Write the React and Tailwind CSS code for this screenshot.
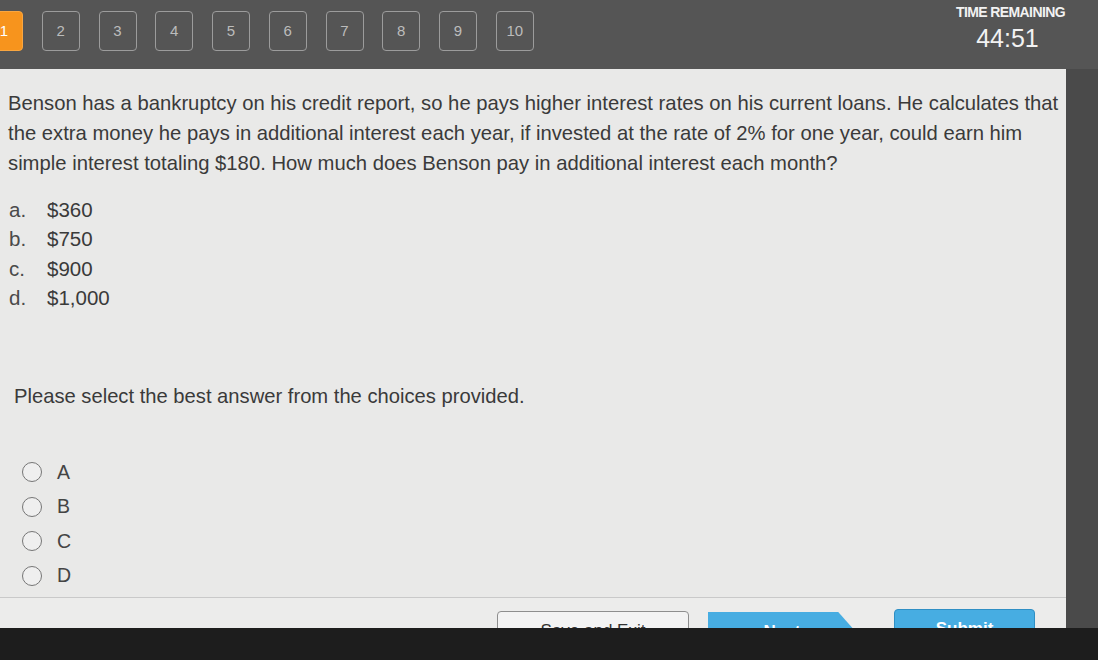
import React from 'react'

const choices = [
  { key: 'a.', value: '$360' },
  { key: 'b.', value: '$750' },
  { key: 'c.', value: '$900' },
  { key: 'd.', value: '$1,000' }
]

export default function App() {
  const questions = [1, 2, 3, 4, 5, 6, 7, 8, 9, 10]

  return (
    <div className="w-[1098px] h-[660px] bg-[#4a4a4a] flex flex-col overflow-hidden font-['Liberation_Sans',Arial,sans-serif]">
      {/* Top bar */}
      <header className="h-[69px] shrink-0 flex items-start bg-[#555555]">
        <nav className="flex gap-[18.75px] ml-[-15px] mt-[11px]">
          {questions.map((n) =>
            n === 1 ? (
              <div
                key={n}
                className="w-[38px] h-[40px] rounded-[4px] bg-[#f7941d] border border-[#f9a640] flex items-center justify-center text-white text-[15px]"
              >
                {n}
              </div>
            ) : (
              <div
                key={n}
                className="w-[38px] h-[40px] rounded-[4px] border-[1.5px] border-[#9c9c9c] flex items-center justify-center text-[#bcbcbc] text-[15px]"
              >
                {n}
              </div>
            )
          )}
        </nav>
        <div className="ml-auto mr-[33px] mt-[4px] flex flex-col items-center text-[#f2f2f2]">
          <span className="text-[14px] font-bold tracking-[-0.6px] leading-[16px]">
            TIME REMAINING
          </span>
          <span className="text-[25px] leading-[28px] mt-[4px] mr-[6px]">44:51</span>
        </div>
      </header>

      {/* Question panel */}
      <div className="h-[559px] shrink-0 flex">
        <main className="w-[1066px] bg-[#e9e9e8] flex flex-col overflow-hidden text-[#3a3a3a]">
          <div className="h-[528px] shrink-0 pl-[8px] pt-[19px]">
            <p className="text-[20.25px] leading-[30px] whitespace-nowrap">
              Benson has a bankruptcy on his credit report, so he pays higher interest rates on his current loans. He calculates that
              <br />
              the extra money he pays in additional interest each year, if invested at the rate of 2% for one year, could earn him
              <br />
              simple interest totaling $180. How much does Benson pay in additional interest each month?
            </p>

            <ol className="mt-[17px] text-[20.5px] leading-[29.3px]">
              {choices.map((c) => (
                <li key={c.key} className="flex">
                  <span className="w-[39px] pl-[1px] text-[#4a4a4a]">{c.key}</span>
                  <span>{c.value}</span>
                </li>
              ))}
            </ol>

            <p className="mt-[69px] ml-[6px] text-[20.2px] leading-[30px]">
              Please select the best answer from the choices provided.
            </p>

            <div className="mt-[44px] ml-[14px]">
              {['A', 'B', 'C', 'D'].map((l) => (
                <label key={l} className="flex items-center h-[34.5px] text-[19.5px] text-[#444]">
                  <span className="w-[20px] h-[20px] rounded-full border-[1.5px] border-[#767676] bg-[#efefef]" />
                  <span className="ml-[15px]">{l}</span>
                </label>
              ))}
            </div>
          </div>

          {/* Footer */}
          <footer className="flex-1 border-t border-[#c9c9c9] bg-[#ececeb] flex items-start pt-[13px]">
            <button className="ml-[497px] w-[192px] h-[40px] rounded-[4px] border border-[#8e8e8e] bg-[#f3f3f3] text-[17px] text-[#333]">
              Save and Exit
            </button>
            <button className="ml-[19px] mt-[1px] w-[148px] h-[40px] bg-[#47ade2] text-white text-[17px] font-bold [clip-path:polygon(0_0,88%_0,100%_50%,88%_100%,0_100%)]">
              Next
            </button>
            <button className="ml-[38px] mt-[-2px] w-[141px] h-[40px] rounded-[4px] border border-[#2f8fc4] bg-[#47ade2] text-white text-[17px] font-bold">
              Submit
            </button>
          </footer>
        </main>
      </div>

      {/* Screen bezel */}
      <div className="flex-1 bg-[#1d1d1d]" />
    </div>
  )
}
